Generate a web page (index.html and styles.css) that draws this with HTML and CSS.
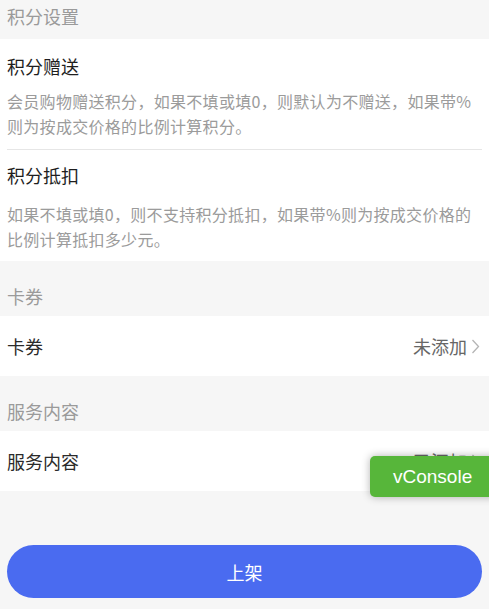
FILE: index.html
```html
<!DOCTYPE html>
<html lang="zh-CN">
<head>
<meta charset="utf-8">
<title>积分设置</title>
<link rel="stylesheet" href="styles.css">
</head>
<body>
<div class="page">
  <div class="section-head section-head--first">积分设置</div>
  <div class="card">
    <div class="item">
      <div class="item-title">积分赠送</div>
      <div class="item-desc">会员购物赠送积分，如果不填或填0，则默认为不赠送，如果带%则为按成交价格的比例计算积分。</div>
    </div>
    <div class="item item--last">
      <div class="item-title">积分抵扣</div>
      <div class="item-desc">如果不填或填0，则不支持积分抵扣，如果带%则为按成交价格的比例计算抵扣多少元。</div>
    </div>
  </div>

  <div class="section-head">卡券</div>
  <div class="row">
    <span class="row-label">卡券</span>
    <span class="row-value">未添加<svg class="chevron" width="9" height="15" viewBox="0 0 9 15"><path d="M1.5 1 L7.5 7.5 L1.5 14" fill="none" stroke="#b5b5b5" stroke-width="1.3"/></svg></span>
  </div>

  <div class="section-head">服务内容</div>
  <div class="row">
    <span class="row-label">服务内容</span>
    <span class="row-value">已添加<svg class="chevron" width="9" height="15" viewBox="0 0 9 15"><path d="M1.5 1 L7.5 7.5 L1.5 14" fill="none" stroke="#b5b5b5" stroke-width="1.3"/></svg></span>
  </div>

  <div class="footer">
    <button class="btn-primary" type="button">上架</button>
  </div>
</div>
<div class="vconsole">vConsole</div>
</body>
</html>
```
FILE: styles.css
```css
html, body {
  margin: 0;
  padding: 0;
  background: #f6f6f6;
  overflow: hidden;
}
body {
  font-family: "Noto Sans CJK SC", "Noto Sans", sans-serif;
  width: 489px;
  height: 609px;
  position: relative;
}
.page {
  display: flex;
  flex-direction: column;
}
.section-head {
  padding: 23px 7px 7px;
  font-size: 18px;
  line-height: 25px;
  color: #9a9a9a;
}
.section-head--first {
  padding-top: 4px;
  padding-bottom: 10px;
}
.card {
  background: #fff;
  padding: 0 7px;
}
.item {
  padding: 14px 0 10px;
  border-bottom: 1px solid #e6e6e6;
}
.item--last {
  border-bottom: none;
  padding-top: 12px;
  padding-bottom: 9px;
}
.item-title {
  font-size: 18px;
  line-height: 26px;
  color: #1e1e1e;
}
.item-desc {
  margin-top: 10px;
  font-size: 16px;
  line-height: 25px;
  color: #9b9b9b;
  letter-spacing: 0.3px;
}
.item--last .item-desc {
  margin-top: 14px;
}
.row {
  background: #fff;
  height: 60px;
  padding: 0 9px 0 7px;
  display: flex;
  align-items: center;
  justify-content: space-between;
}
.row-label {
  font-size: 18px;
  color: #2a2a2a;
}
.row-value {
  display: flex;
  align-items: center;
  gap: 4px;
  font-size: 18px;
  color: #666;
}
.footer {
  padding: 54px 7px 0;
}
.btn-primary {
  display: block;
  width: 100%;
  height: 53px;
  border: none;
  border-radius: 27px;
  background: #4a6bf0;
  color: #fff;
  font-family: inherit;
  font-size: 18px;
  padding: 0;
}
.vconsole {
  position: absolute;
  left: 370px;
  top: 456px;
  width: 130px;
  height: 41px;
  box-sizing: border-box;
  padding-left: 23px;
  line-height: 41px;
  border-radius: 5px;
  background: #57b63a;
  color: #fff;
  font-family: "Liberation Sans", Arial, sans-serif;
  font-size: 19px;
  box-shadow: 0 0 8px rgba(0, 0, 0, 0.3);
}
```
